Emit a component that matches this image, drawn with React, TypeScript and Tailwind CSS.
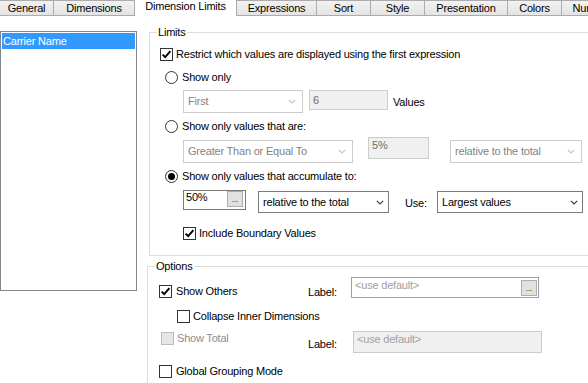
import React from "react";

const Chevron = ({ disabled }: { disabled?: boolean }) => (
  <svg width="8" height="5" viewBox="0 0 8 5" className="shrink-0">
    <path
      d="M0.8 0.8 L4 4 L7.2 0.8"
      fill="none"
      stroke={disabled ? "#c4c4c4" : "#3c3c3c"}
      strokeWidth="1.2"
    />
  </svg>
);

const Check = ({ checked, disabled }: { checked?: boolean; disabled?: boolean }) => (
  <span
    className={
      "flex h-[13px] w-[13px] shrink-0 items-center justify-center border " +
      (disabled ? "border-[#bcbcbc] bg-[#e6e6e6]" : "border-[#333333] bg-white")
    }
  >
    {checked && (
      <svg width="11" height="11" viewBox="0 0 11 11">
        <path d="M1.6 5.6 L4.2 8.2 L9.4 2.2" fill="none" stroke="#000" strokeWidth="1.9" />
      </svg>
    )}
  </span>
);

const Radio = ({ checked }: { checked?: boolean }) => (
  <span className="flex h-[13px] w-[13px] shrink-0 items-center justify-center rounded-full border border-[#333333] bg-white">
    {checked && <span className="h-[7px] w-[7px] rounded-full bg-black" />}
  </span>
);

const Select = ({
  text,
  disabled,
  className,
}: {
  text: string;
  disabled?: boolean;
  className: string;
}) => (
  <div
    className={
      "flex shrink-0 items-center justify-between border bg-white pl-[4px] " +
      (disabled ? "border-[#cccccc] pr-[6px] text-[#838383] " : "border-[#7a7a7a] pr-[4px] text-black ") +
      className
    }
  >
    <span className="whitespace-nowrap">{text}</span>
    <Chevron disabled={disabled} />
  </div>
);

const Dots = () => (
  <span className="flex h-[16px] w-[16px] shrink-0 items-end justify-center border border-[#adadad] bg-[#e1e1e1] pb-[2px] text-[8px] leading-[8px] tracking-normal text-black">
    ...
  </span>
);

const tabs: { label: string; cls: string; active?: boolean }[] = [
  { label: "General", cls: "w-[54px]" },
  { label: "Dimensions", cls: "w-[81px]" },
  { label: "Dimension Limits", cls: "w-[102px]", active: true },
  { label: "Expressions", cls: "w-[80px]" },
  { label: "Sort", cls: "w-[54px]" },
  { label: "Style", cls: "w-[54px]" },
  { label: "Presentation", cls: "w-[83px]" },
  { label: "Colors", cls: "w-[54px]" },
  { label: "Number", cls: "w-[60px]" },
];

export default function App() {
  return (
    <div className="h-[383px] w-[588px] overflow-hidden bg-white font-['Liberation_Sans',Arial,sans-serif] text-[11px] leading-[13px] tracking-[-0.2px] text-black">
      {/* Tab strip */}
      <div className="flex h-[16px] items-end border-b border-[#acacac]">
        {tabs.map((t) =>
          t.active ? (
            <div
              key={t.label}
              className={
                "-mb-px flex h-[18px] shrink-0 items-center justify-center border-r border-[#acacac] bg-white pb-[2px] " +
                t.cls
              }
            >
              <span className="whitespace-nowrap">{t.label}</span>
            </div>
          ) : (
            <div
              key={t.label}
              className={
                "flex h-[15px] shrink-0 items-center justify-center overflow-hidden border-r border-t border-[#acacac] bg-linear-to-b from-[#f2f2f2] to-[#e4e4e4] " +
                t.cls
              }
            >
              <span className="whitespace-nowrap">{t.label}</span>
            </div>
          )
        )}
      </div>

      {/* Content */}
      <div className="flex">
        {/* List box */}
        <div className="mt-[15px] h-[260px] w-[137px] shrink-0 border border-[#828790] p-px">
          <div className="h-[16px] bg-[#3399ff] pl-[1px] leading-[16px] text-white">Carrier Name</div>
        </div>

        {/* Right column */}
        <div className="ml-[10px] mt-[10px] flex shrink-0 flex-col">
          <fieldset className="ml-[2px] w-[470px] border border-[#dcdcdc]">
            <legend className="ml-[7px] px-[1px] leading-[13px]">Limits</legend>
            <div className="flex flex-col pb-[15px] pl-[10px]">
              <div className="mt-[9px] flex h-[13px] items-center">
                <Check checked />
                <span className="ml-[3px] whitespace-nowrap">
                  Restrict which values are displayed using the first expression
                </span>
              </div>

              <div className="ml-[5px] mt-[10px] flex h-[13px] items-center">
                <Radio />
                <span className="ml-[4px] whitespace-nowrap">Show only</span>
              </div>

              <div className="ml-[23px] mt-[6px] flex h-[23px] items-start">
                <Select text="First" disabled className="h-[23px] w-[120px]" />
                <div className="ml-[6px] h-[20px] w-[79px] shrink-0 border border-[#cccccc] bg-[#f0f0f0] pl-[3px] pt-[3px] text-[#6d6d6d]">
                  6
                </div>
                <span className="ml-[5px] mt-[6px]">Values</span>
              </div>

              <div className="ml-[5px] mt-[7px] flex h-[13px] items-center">
                <Radio />
                <span className="ml-[4px] whitespace-nowrap">Show only values that are:</span>
              </div>

              <div className="ml-[23px] mt-[4px] flex items-start">
                <Select text="Greater Than or Equal To" disabled className="mt-[3px] h-[23px] w-[170px]" />
                <div className="ml-[15px] h-[22px] w-[61px] shrink-0 border border-[#cccccc] bg-[#f0f0f0] pl-[3px] pt-[1px] text-[#6d6d6d]">
                  5%
                </div>
                <Select text="relative to the total" disabled className="ml-[21px] mt-[3px] h-[23px] w-[132px]" />
              </div>

              <div className="ml-[5px] mt-[7px] flex h-[13px] items-center">
                <Radio checked />
                <span className="ml-[4px] whitespace-nowrap">Show only values that accumulate to:</span>
              </div>

              <div className="ml-[23px] mt-[7px] flex items-start">
                <div className="flex h-[20px] w-[63px] shrink-0 items-start justify-between border border-[#7a7a7a] bg-white pl-[2px] pr-[2px]">
                  <span>50%</span>
                  <Dots />
                </div>
                <Select text="relative to the total" className="ml-[12px] mt-[1px] h-[22px] w-[131px]" />
                <span className="ml-[16px] mt-[7px] w-[32px] shrink-0">Use:</span>
                <Select text="Largest values" className="mt-[1px] h-[22px] w-[146px]" />
              </div>

              <div className="ml-[23px] mt-[14px] flex h-[13px] items-center">
                <Check checked />
                <span className="ml-[3px] whitespace-nowrap">Include Boundary Values</span>
              </div>
            </div>
          </fieldset>

          <fieldset className="mt-[4px] w-[470px] border border-[#dcdcdc]">
            <legend className="ml-[7px] px-[1px] leading-[13px]">Options</legend>
            <div className="flex flex-col pb-[20px] pl-[11px]">
              <div className="mt-[4px] flex items-start">
                <div className="mt-[8px] flex h-[13px] w-[149px] shrink-0 items-center">
                  <Check checked />
                  <span className="ml-[4px] whitespace-nowrap">Show Others</span>
                </div>
                <span className="mt-[9px] w-[43px] shrink-0">Label:</span>
                <div className="flex h-[21px] w-[188px] shrink-0 items-start justify-between border border-[#a0a0a0] bg-white pl-[3px] pr-px pt-px">
                  <span className="text-[#a0a0a0]">&lt;use default&gt;</span>
                  <span className="mt-px">
                    <Dots />
                  </span>
                </div>
              </div>

              <div className="ml-[18px] mt-[11px] flex h-[13px] items-center">
                <Check />
                <span className="ml-[3px] whitespace-nowrap">Collapse Inner Dimensions</span>
              </div>

              <div className="mt-[8px] flex items-start">
                <div className="ml-[2px] mt-[1px] flex h-[13px] w-[147px] shrink-0 items-center">
                  <Check disabled />
                  <span className="ml-[3px] whitespace-nowrap text-[#8d8d8d]">Show Total</span>
                </div>
                <span className="mt-[7px] w-[45px] shrink-0">Label:</span>
                <div className="h-[22px] w-[189px] shrink-0 border border-[#cccccc] bg-[#f0f0f0] pl-[3px] pt-px text-[#a0a0a0]">
                  &lt;use default&gt;
                </div>
              </div>

              <div className="mt-[12px] flex h-[13px] items-center">
                <Check />
                <span className="ml-[4px] whitespace-nowrap">Global Grouping Mode</span>
              </div>
            </div>
          </fieldset>
        </div>
      </div>
    </div>
  );
}
